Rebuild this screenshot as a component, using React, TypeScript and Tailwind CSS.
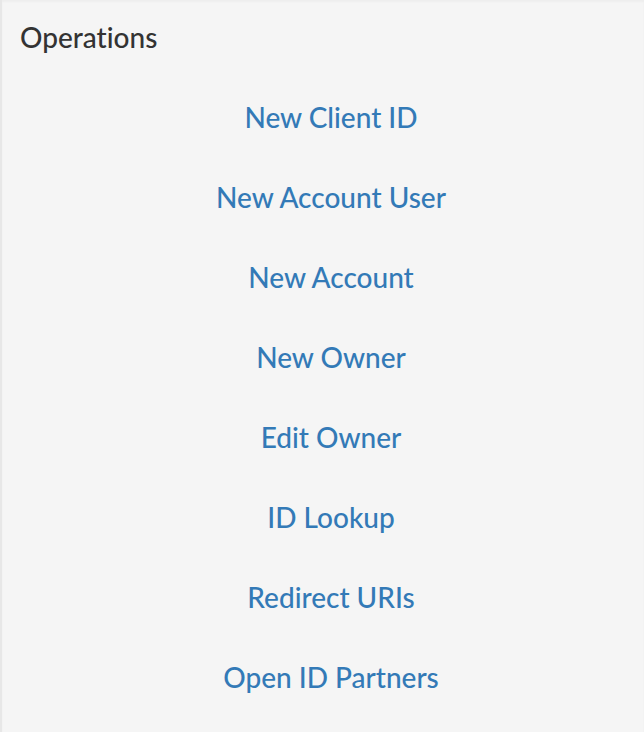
const operations: string[] = [
  "New Client ID",
  "New Account User",
  "New Account",
  "New Owner",
  "Edit Owner",
  "ID Lookup",
  "Redirect URIs",
  "Open ID Partners",
];

export default function App() {
  return (
    <aside className="min-h-screen border-l-2 border-[#e7e7e7] bg-[#f5f5f5] pb-3 font-['Lato',sans-serif] text-[28px] font-medium leading-10 text-[#333333] shadow-[inset_0_2px_2px_rgba(0,0,0,0.03)] [font-variant-ligatures:none]">
      <h2 className="px-[18px] pt-[17px]">Operations</h2>
      <nav aria-label="Operations" className="pt-5 pl-4">
        <ul>
          {operations.map((label) => (
            <li key={label}>
              <a href="#" className="block py-5 text-center text-[#337ab7]">
                {label}
              </a>
            </li>
          ))}
        </ul>
      </nav>
    </aside>
  );
}
